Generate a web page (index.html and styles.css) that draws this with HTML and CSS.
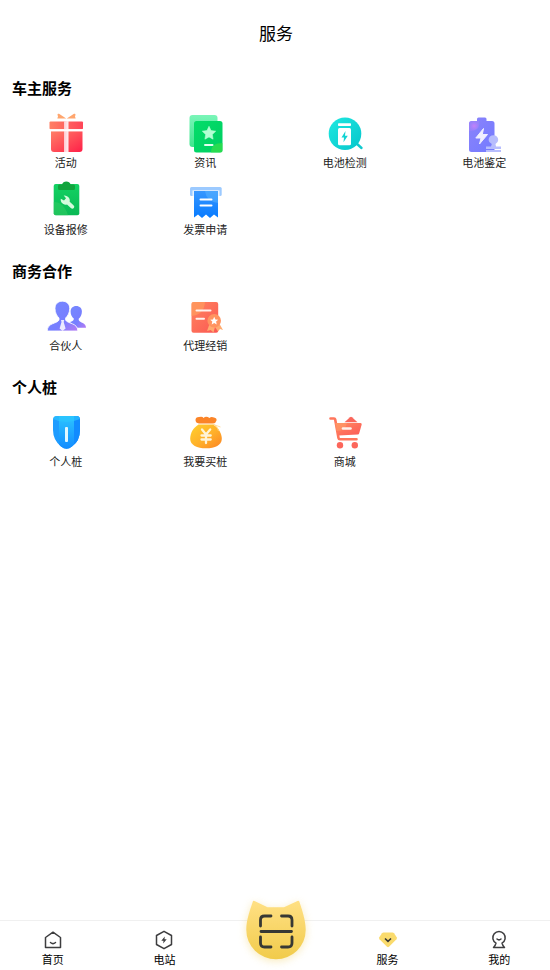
FILE: index.html
```
<!DOCTYPE html>
<html lang="zh">
<head>
    <meta charset="UTF-8">
    <meta name="viewport" content="width=device-width, initial-scale=1.0">
    <title>服务</title>
    <link rel="stylesheet" href="styles.css">
</head>
<body>
    <header class="header">
        <h1>服务</h1>
    </header>
    <main class="main">
        <section class="group">
            <h2>车主服务</h2>
            <div class="list">
                <a class="item" href="#">
                    <svg viewBox="0 0 40 40">
                        <defs>
                            <linearGradient id="red" x1="0" y1="0" x2="1" y2="1"><stop offset="0" stop-color="#ff8068"/><stop offset="1" stop-color="#ff1f48"/></linearGradient>
                            <linearGradient id="lid" x1="0" y1="0" x2="1" y2="0"><stop offset="0" stop-color="#ff8066"/><stop offset="1" stop-color="#ff4457"/></linearGradient>
                            <linearGradient id="ribbon" x1="0" y1="0" x2="1" y2="0"><stop offset="0" stop-color="#ffc9cf"/><stop offset="1" stop-color="#fff0f3"/></linearGradient>
                        </defs>
                        <path d="M20.200 5.500 13 .8Q11.500 .2 11.500 1.800L12 3.500 11.300 5.500ZM20.800 5.500 28 .8Q29.500 .2 29.500 1.800L29 3.500 29.700 5.500Z" fill="#ffa66e"/>
                        <rect x="3.500" y="8.500" width="33.500" height="7.800" rx="1" fill="url(#lid)"/>
                        <path d="M5 18.300H36.500V36Q36.500 39 33.500 39H8Q5 39 5 36Z" fill="url(#red)"/>
                        <path d="M18 8H22.500V39H18Z" fill="url(#ribbon)"/>
                        <path d="M3.500 16.300H37V18.300H3.500Z" fill="#fff"/>
                    </svg>
                    <span>活动</span>
                </a>
                <a class="item" href="#">
                    <svg viewBox="0 0 40 40">
                        <defs>
                            <linearGradient id="mint" x1="0" y1="0" x2="0" y2="1"><stop offset="0" stop-color="#7af5b8"/><stop offset="1" stop-color="#3ee68d"/></linearGradient>
                            <linearGradient id="green" x1="0" y1="0" x2="1" y2="1"><stop offset="0" stop-color="#04dd69"/><stop offset="1" stop-color="#00ce62"/></linearGradient>
                        </defs>
                        <rect x="4.500" y="2" width="28" height="32" rx="3" fill="url(#mint)"/>
                        <rect x="9" y="8" width="28.500" height="31.500" rx="2.500" fill="url(#green)"/>
                        <path d="M26 39.500Q26 30 37.500 30V37Q37.500 39.500 35 39.500Z" fill="#3ee247" opacity=".65"/>
                        <path d="M24 13.300 26 17.600 30.700 18.200 27.300 21.500 28.100 26.200 24 23.900 19.900 26.200 20.700 21.500 17.300 18.200 22 17.600Z" fill="#b3ffd3" stroke="#b3ffd3" stroke-width=".6" stroke-linejoin="round"/>
                        <rect x="19" y="31" width="9.500" height="2" rx="1" fill="#e3fff0"/>
                    </svg>
                    <span>资讯</span>
                </a>
                <a class="item" href="#">
                    <svg viewBox="0 0 40 40">
                        <defs>
                            <linearGradient id="cyan" x1="0" y1="0" x2="1" y2="1"><stop offset="0" stop-color="#20e9e1"/><stop offset="1" stop-color="#05c5cb"/></linearGradient>
                        </defs>
                        <path d="M31 30 36.500 35" stroke="#10c9ce" stroke-width="2.400" stroke-linecap="round"/>
                        <circle cx="20" cy="20.700" r="16.300" fill="url(#cyan)"/>
                        <rect x="13" y="10.300" width="13" height="2.700" rx=".8" fill="#fff"/>
                        <rect x="13" y="15" width="13" height="17.300" rx="1.500" fill="#fff"/>
                        <path d="M20.500 18 16.500 24.500H19L18.500 29.300 22.800 22.800H20Z" fill="#11d3d3"/>
                    </svg>
                    <span>电池检测</span>
                </a>
                <a class="item" href="#">
                    <svg viewBox="0 0 40 40">
                        <defs>
                            <linearGradient id="violet" x1="0" y1="0" x2="1" y2="1"><stop offset="0" stop-color="#8b83fb"/><stop offset="1" stop-color="#737bff"/></linearGradient>
                            <radialGradient id="pinkglow"><stop offset="0" stop-color="#c481fa"/><stop offset="1" stop-color="#a682fa" stop-opacity=".5"/></radialGradient>
                        </defs>
                        <path d="M13 8V6Q13 4.500 14.500 4.500H21Q22.500 4.500 22.500 6V8H28Q30.500 8 30.500 10.500V36.500Q30.500 39 28 39H7.500Q5 39 5 36.500V10.500Q5 8 7.500 8Z" fill="url(#violet)"/>
                        <path d="M5 18V10.500Q5 8 7.500 8H15Q17 18 5 18Z" fill="url(#pinkglow)"/>
                        <path d="M19.500 15.500 11.800 25H17L15.500 31 23.500 21.500H18.300Z" fill="#f0efff" stroke="#f0efff" stroke-linejoin="round"/>
                        <path d="M22 33.500H27L27.800 31Q24.600 29.500 24.600 27A4.800 4.800 0 0 1 34.200 27Q34.200 29.500 31.500 31L32 33.500H37V36H22ZM22 37H37V39H22Z" fill="#b7bdfd"/>
                    </svg>
                    <span>电池鉴定</span>
                </a>
                <a class="item" href="#">
                    <svg viewBox="0 0 40 40">
                        <defs>
                            <linearGradient id="board" x1="0" y1="0" x2="0" y2="1"><stop offset="0" stop-color="#14d263"/><stop offset="1" stop-color="#09b954"/></linearGradient>
                        </defs>
                        <rect x="7.700" y="4" width="25.600" height="31.200" rx="2" fill="url(#board)"/>
                        <path d="M7.700 22Q18 22 22 35.200H9.700Q7.700 35.200 7.700 33.200Z" fill="#3cd165" opacity=".45"/>
                        <path d="M12 8.500V6Q12 4.500 13.500 4.500H16Q17 1.400 20.300 1.400T24.700 4.500H27.500Q29 4.500 29 6V8.500Q29 10 27.500 10H13.500Q12 10 12 8.500Z" fill="#12a43d"/>
                        <path d="M21 16.300A5 5 0 0 0 17.700 15.500L20 18.200 18 20.600 14.800 18.700A5 5 0 0 0 21 24.500L24.800 28Q26.500 29.300 27.800 28T27.500 25.200L23.700 21.700A5 5 0 0 0 21 16.300Z" fill="#d5fbdd"/>
                    </svg>
                    <span>设备报修</span>
                </a>
                <a class="item" href="#">
                    <svg viewBox="0 0 40 40">
                        <defs>
                            <linearGradient id="paper" x1="0" y1="0" x2="0" y2="1"><stop offset="0" stop-color="#3797ff"/><stop offset="1" stop-color="#087bff"/></linearGradient>
                        </defs>
                        <rect x="5" y="7" width="31.700" height="9" rx="1.500" fill="#9ccaff"/>
                        <rect x="7.500" y="10.300" width="27" height="5.700" fill="#e8f3ff"/>
                        <path d="M9 11H33V37.500L29 34.500 25 38 21 34.500 17 38 13 34.500 9 37.500Z" fill="url(#paper)"/>
                        <path d="M20 11H33V23Q21 21 20 11Z" fill="#5cb6ff" opacity=".5"/>
                        <path d="M15.500 19.500H26.500M15.500 25.500H26.500" stroke="#fff" stroke-width="2" stroke-linecap="round"/>
                    </svg>
                    <span>发票申请</span>
                </a>
            </div>
        </section>
        <section class="group">
            <h2>商务合作</h2>
            <div class="list">
                <a class="item" href="#">
                    <svg viewBox="0 0 40 40">
                        <defs>
                            <linearGradient id="man" x1="0" y1="0" x2="1" y2="1"><stop offset=".2" stop-color="#7686ff"/><stop offset=".6" stop-color="#777eff"/><stop offset="1" stop-color="#b57bf3"/></linearGradient>
                        </defs>
                        <path d="M30.200 10C33.700 10 35.900 12.300 35.900 15.400 35.900 18.600 34.500 21 32.700 22.700V24C33.800 27 40 26.500 40 31.800H29L24 26Q27.800 25 27.800 23V22.500C25.800 20.800 24.600 18.400 24.600 15.400 24.600 12.300 26.800 10 30.200 10Z" fill="url(#man)"/>
                        <path d="M16.300 5.200C20.800 5.200 23.700 8.300 23.700 12.400 23.700 16.600 21.800 20 19.600 22V24C21.500 28 31.800 26.500 31.800 35H1.300C1.300 26.500 11.100 28 13 24V22C10.800 20 9 16.600 9 12.400 9 8.300 11.800 5.200 16.300 5.200Z" fill="url(#man)" stroke="#fff" stroke-width=".8"/>
                        <path d="M15 24H18.200L17.700 26 19.600 32.500 16.600 35 13.600 32.500 15.500 26Z" fill="#eceaff"/>
                    </svg>
                    <span>合伙人</span>
                </a>
                <a class="item" href="#">
                    <svg viewBox="0 0 40 40">
                        <defs>
                            <linearGradient id="cert" x1="0" y1="0" x2="1" y2="1"><stop offset="0" stop-color="#ff855f"/><stop offset="1" stop-color="#fb5753"/></linearGradient>
                        </defs>
                        <rect x="6.500" y="6" width="26.700" height="30.800" rx="2" fill="url(#cert)"/>
                        <path d="M6.500 20V8Q6.500 6 8.500 6H20Q19 19 6.500 20Z" fill="#ffa15d" opacity=".6"/>
                        <path d="M11.500 14.500H25.500M11.500 22.800H19" stroke="#fff2ed" stroke-width="2" stroke-linecap="round"/>
                        <path d="M24.500 28 22 35 25.700 34 28.500 36.500 30 31 33 35.500 35 33 38 34 34 27Z" fill="#ffab70"/>
                        <circle cx="29.200" cy="24.800" r="6.800" fill="#ff9460"/>
                        <path d="M29.200 20.800 30.400 23.400 33.200 23.700 31.100 25.600 31.700 28.400 29.200 27 26.700 28.400 27.300 25.600 25.200 23.700 28 23.400Z" fill="#fff"/>
                    </svg>
                    <span>代理经销</span>
                </a>
            </div>
        </section>
        <section class="group">
            <h2>个人桩</h2>
            <div class="list">
                <a class="item" href="#">
                    <svg viewBox="0 0 40 40">
                        <defs>
                            <linearGradient id="shield" x1="0" y1="0" x2="0" y2="1"><stop offset="0" stop-color="#2cc4ff"/><stop offset="1" stop-color="#128aff"/></linearGradient>
                            <clipPath id="shieldclip"><path d="M11 4H30.500Q34 4 34 8V18Q34 29 26 34.500 20.600 39 15 34.500 7 28 7 18V8Q7 4 11 4Z"/></clipPath>
                        </defs>
                        <g clip-path="url(#shieldclip)">
                            <path d="M7 4H34V38H7Z" fill="#1e9cff"/>
                            <path d="M13 4H28V38H13Z" fill="url(#shield)"/>
                            <path d="M28 4H34V38H28Z" fill="#118bff"/>
                            <path d="M7 4H34V7Q20 13 7 7Z" fill="#2bc5ff" opacity=".7"/>
                        </g>
                        <rect x="19" y="15" width="3" height="15" rx="1" fill="#e2f8ff"/>
                    </svg>
                    <span>个人桩</span>
                </a>
                <a class="item" href="#">
                    <svg viewBox="0 0 40 40">
                        <defs>
                            <linearGradient id="bag" x1="0" y1="0" x2="1" y2="1"><stop offset="0" stop-color="#ffd12d"/><stop offset=".55" stop-color="#ffaf2a"/><stop offset="1" stop-color="#fc8424"/></linearGradient>
                        </defs>
                        <path d="M13.500 12.500H28C34 16 36.800 22 36.800 27 36.800 33 30 36.300 21 36.300S5.200 33 5.200 27C5.200 21 8 16 13.500 12.500Z" fill="url(#bag)"/>
                        <path d="M14 5Q17.500 4 18.500 6 21 3.500 24.500 6 26 4.500 29 5.500 32 6 31.500 8.500 31 11 28 11.500H14Q10.500 11 10.500 8T14 5Z" fill="#fb8428"/>
                        <path d="M27.500 12Q32 13 33.500 19M28.500 12.500 35.500 15" stroke="#ffd58d" stroke-width=".8" fill="none"/>
                        <path d="M17 17.500 21 22.500 25.200 17.500M21 23V31M16.500 23.500H25.700M16.500 27.500H25.700" stroke="#fff4d8" stroke-width="2.300" fill="none" stroke-linecap="round"/>
                    </svg>
                    <span>我要买桩</span>
                </a>
                <a class="item" href="#">
                    <svg viewBox="0 0 40 40">
                        <defs>
                            <linearGradient id="cart" x1="0" y1="0" x2="1" y2="1"><stop offset="0" stop-color="#ff9361"/><stop offset=".5" stop-color="#fe705c"/><stop offset="1" stop-color="#fb5a56"/></linearGradient>
                        </defs>
                        <path d="M19.500 10.300 25 5.200Q26 4.500 27 5.200L32.500 10.300Z" fill="#fa665b"/>
                        <path d="M5.500 6.500H9Q10 6.500 10.200 7.500L13.500 26Q13.700 27.300 15 27.300H31.500" stroke="#ff765c" stroke-width="2.600" stroke-linecap="round" fill="none"/>
                        <path d="M11 11H35.500Q37 11 36.700 12.500L34.200 21.300Q33.900 22.500 32.700 22.500L13.500 23.500Z" fill="url(#cart)"/>
                        <path d="M10 11H22Q20 19 11.500 19Z" fill="#ff9b68" opacity=".6"/>
                        <path d="M18 16.500H25.500" stroke="#fff2ec" stroke-width="2.600" stroke-linecap="round"/>
                        <circle cx="15" cy="33.200" r="3.200" fill="#fc665b"/>
                        <circle cx="29.800" cy="33.200" r="3.200" fill="#fc665b"/>
                    </svg>
                    <span>商城</span>
                </a>
            </div>
        </section>
    </main>
    <nav class="tabbar">
        <a class="tab" href="#">
            <svg viewBox="0 0 20 20" fill="none" stroke="#3d3d3f" stroke-width="1.500" stroke-linejoin="round" stroke-linecap="round">
                <path d="M10 2.200 17.500 7.500V17.500H2.500V7.500ZM7.500 12.500Q10 14.800 12.500 12.500"/>
            </svg>
            <span>首页</span>
        </a>
        <a class="tab" href="#">
            <svg viewBox="0 0 20 20" fill="none" stroke="#3d3d3f" stroke-width="1.500" stroke-linejoin="round">
                <path d="M10 1.300 17.500 5.500V14.500L10 18.700 2.500 14.500V5.500Z"/>
                <path d="M10.800 6.500 7.300 10.700H9.500L9.200 13.500 12.700 9.300H10.500Z" fill="#3d3d3f" stroke="none"/>
            </svg>
            <span>电站</span>
        </a>
        <a class="scan" href="#" aria-label="扫码">
            <svg viewBox="0 0 60 60">
                <defs>
                    <linearGradient id="cat" x1="0" y1="0" x2="0" y2="1"><stop offset="0" stop-color="#ffe084"/><stop offset="1" stop-color="#f1cb4b"/></linearGradient>
                </defs>
                <path d="M7 1Q7.500 .3 8.500 1L21.500 7.300H38L51.500 1Q52.700 .3 53.200 1.200C56 10 59.700 20 59.700 30A29.700 29.200 0 0 1 .3 30C.3 20 4 10 7 1Z" fill="url(#cat)"/>
                <path d="M14.500 26V20Q14.500 16 18.500 16H25M35.500 16H42Q46 16 46 20V26M14.500 37V43Q14.500 47 18.500 47H25M35.500 47H42Q46 47 46 43V37M15 31.500H45.500" fill="none" stroke="#373834" stroke-width="2.800" stroke-linecap="round"/>
            </svg>
        </a>
        <a class="tab" href="#">
            <svg viewBox="0 0 20 20">
                <path d="M5.500 2.500H14.500Q15.500 2.500 16 3.200L18.700 7.300Q19.300 8.300 18.500 9.200L11 16.800Q10 17.700 9 16.800L1.500 9.200Q.7 8.300 1.300 7.300L4 3.200Q4.500 2.500 5.500 2.500Z" fill="#fadb6d"/>
                <path d="M7 8.500 10 11.300 13 8.500" fill="none" stroke="#373834" stroke-width="1.600"/>
            </svg>
            <span>服务</span>
        </a>
        <a class="tab" href="#">
            <svg viewBox="0 0 20 20" fill="none" stroke="#3d3d3f" stroke-width="1.500" stroke-linejoin="round" stroke-linecap="round">
                <path d="M7 13.200A6.200 6.200 0 1 1 13 13.200Q13.500 15.500 15.500 17.500H4.500Q6.500 15.500 7 13.200ZM8 9Q10 10.800 12 9"/>
            </svg>
            <span>我的</span>
        </a>
    </nav>
</body>
</html>
```
FILE: styles.css
```
body,h1,h2{
    margin: 0;
    padding: 0;
}
body{
    display: flex;
    flex-direction: column;
    min-height: 100vh;
    background: #fff;
    color: #000;
    font-family: "Noto Sans CJK SC", sans-serif;
}
a{
    color: inherit;
    text-decoration: none;
}
svg{
    display: block;
}
.header{
    padding: 20px 0 20px 2px;
    text-align: center;
}
.header h1{
    font-size: 17px;
    line-height: 26px;
    font-weight: 400;
}
.main{
    flex: 1;
    padding-top: 11px;
}
.group{
    margin-bottom: 22px;
}
.group h2{
    padding-left: 12px;
    margin-bottom: 14px;
    font-size: 15px;
    line-height: 22px;
    font-weight: 700;
}
.list{
    display: grid;
    grid-template-columns: repeat(4, 1fr);
    gap: 9px 8px;
}
.item{
    display: flex;
    flex-direction: column;
    align-items: center;
    color: #222;
    font-size: 11px;
    line-height: 18px;
}
.item svg{
    width: 40px;
    height: 40px;
}
/* 底部导航 */
.tabbar{
    position: sticky;
    bottom: 0;
    display: grid;
    grid-template-columns: repeat(5, 1fr);
    column-gap: 10px;
    height: 49px;
    padding-left: 2px;
    border-top: 1px solid #f0f0f0;
    background: #fff;
}
.tab{
    display: flex;
    flex-direction: column;
    align-items: center;
    padding-top: 9px;
    font-size: 11px;
    line-height: 18px;
}
.tab svg{
    width: 20px;
    height: 20px;
}
/* 中间的扫码按钮要超出导航栏 */
.scan{
    justify-self: center;
    margin-top: -21px;
}
.scan svg{
    width: 60px;
    height: 60px;
    filter: drop-shadow(0 2px 4px rgba(240, 205, 90, .4));
}
```
